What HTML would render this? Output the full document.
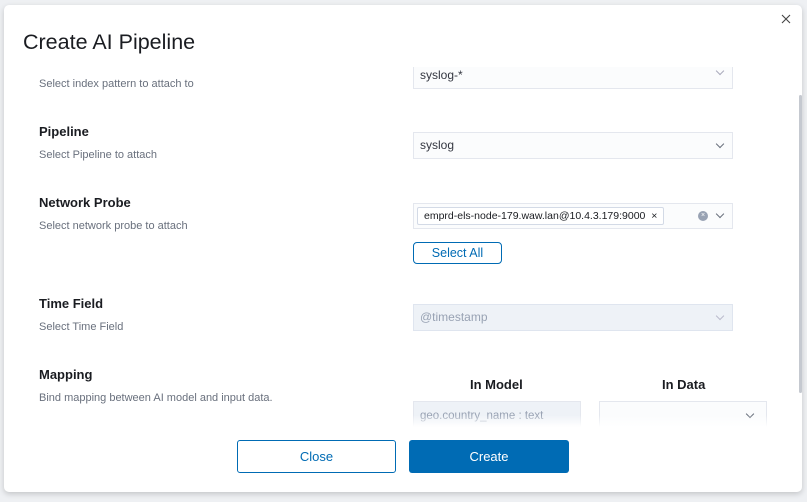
<!DOCTYPE html>
<html><head><style>
*{box-sizing:border-box;margin:0;padding:0}
body{width:807px;height:502px;background:#eef0f3;font-family:"Liberation Sans",sans-serif;position:relative;overflow:hidden}
.modal{position:absolute;left:4px;top:5px;width:798px;height:487px;background:#fff;border-radius:5px;box-shadow:0 2px 6px rgba(0,0,0,.18);overflow:hidden}
.a{position:absolute}
.t{font-size:21.5px;color:#1a1c21;left:19px;top:25px}
.lab{font-size:13px;font-weight:bold;color:#1a1c21;left:35px}
.help{font-size:11px;color:#69707d;left:35px}
.sel{left:409px;width:320px;height:27px;background:#fbfcfd;border:1px solid #e4e7ee;font-size:12px;color:#343741;padding:0 0 0 6px;line-height:25px}
.chev{position:absolute;right:9px;top:8px;width:6px;height:6px;border-right:1px solid #69707d;border-bottom:1px solid #69707d;transform:rotate(45deg)}
.btn{position:absolute;height:33px;border-radius:3px;font-size:13px;text-align:center;line-height:31px}
</style></head><body>
<div class="modal">
<div class="a t">Create AI Pipeline</div>
<svg class="a" style="right:11px;top:9px" width="10" height="10" viewBox="0 0 10 10"><path d="M1 1L9 9M9 1L1 9" stroke="#444" stroke-width="1.1"/></svg>
<div class="a" style="left:0;top:62px;width:798px;height:360px;overflow:hidden">
 <div class="a help" style="top:11px">Select index pattern to attach to</div>
 <div class="a sel" style="top:-5px">syslog-*<span class="chev" style="top:5px;border-color:#aab"></span></div>
 <div class="a lab" style="top:57px">Pipeline</div>
 <div class="a help" style="top:82px">Select Pipeline to attach</div>
 <div class="a sel" style="top:65px">syslog<span class="chev"></span></div>
 <div class="a lab" style="top:128px">Network Probe</div>
 <div class="a help" style="top:153px">Select network probe to attach</div>
 <div class="a sel" style="top:136px;height:26px;padding:0">
  <span style="position:absolute;left:3px;top:3px;white-space:nowrap;border:1px solid #d3dae6;border-radius:2px;height:18px;line-height:16px;font-size:10.5px;padding:0 6px;color:#1a1c21;background:#fff">emprd-els-node-179.waw.lan@10.4.3.179:9000 &nbsp;×</span>
  <span style="position:absolute;right:24px;top:7px;width:10px;height:10px;border-radius:50%;background:#98a2b3;color:#fff;font-size:7px;line-height:10px;text-align:center">×</span>
  <span class="chev" style="top:7px"></span></div>
 <div class="btn" style="left:409px;top:175px;width:89px;height:22px;line-height:20px;border:1px solid #006bb4;color:#006bb4;border-radius:4px;font-size:12.5px">Select All</div>
 <div class="a lab" style="top:229px">Time Field</div>
 <div class="a help" style="top:254px">Select Time Field</div>
 <div class="a sel" style="top:237px;background:#eef2f7;color:#98a2b3;border-color:#dfe5ef">@timestamp<span class="chev" style="border-color:#bbc"></span></div>
 <div class="a lab" style="top:300px">Mapping</div>
 <div class="a help" style="top:325px">Bind mapping between AI model and input data.</div>
 <div class="a" style="left:466px;top:310px;font-size:13px;font-weight:bold;color:#1a1c21">In Model</div>
 <div class="a" style="left:658px;top:310px;font-size:13px;font-weight:bold;color:#1a1c21">In Data</div>
 <div class="a sel" style="top:334px;width:168px;height:30px;background:#eef2f7;color:#98a2b3;font-size:11.5px;line-height:14px;padding-top:7px">geo.country_name : text</div>
 <div class="a sel" style="left:595px;top:334px;width:168px;height:30px"><span class="chev" style="top:9px;right:13px"></span></div>
 <div class="a" style="left:0;top:348px;width:798px;height:12px;background:linear-gradient(rgba(255,255,255,0),#fff)"></div>
</div>
<div class="a" style="left:795px;top:90px;width:3px;height:298px;background:#c5c9d0;border-radius:2px"></div>
<div class="btn" style="left:233px;top:435px;width:159px;border:1px solid #006bb4;color:#006bb4">Close</div>
<div class="btn" style="left:405px;top:435px;width:160px;background:#006bb4;color:#fff;line-height:33px">Create</div>
</div>
</body></html>
